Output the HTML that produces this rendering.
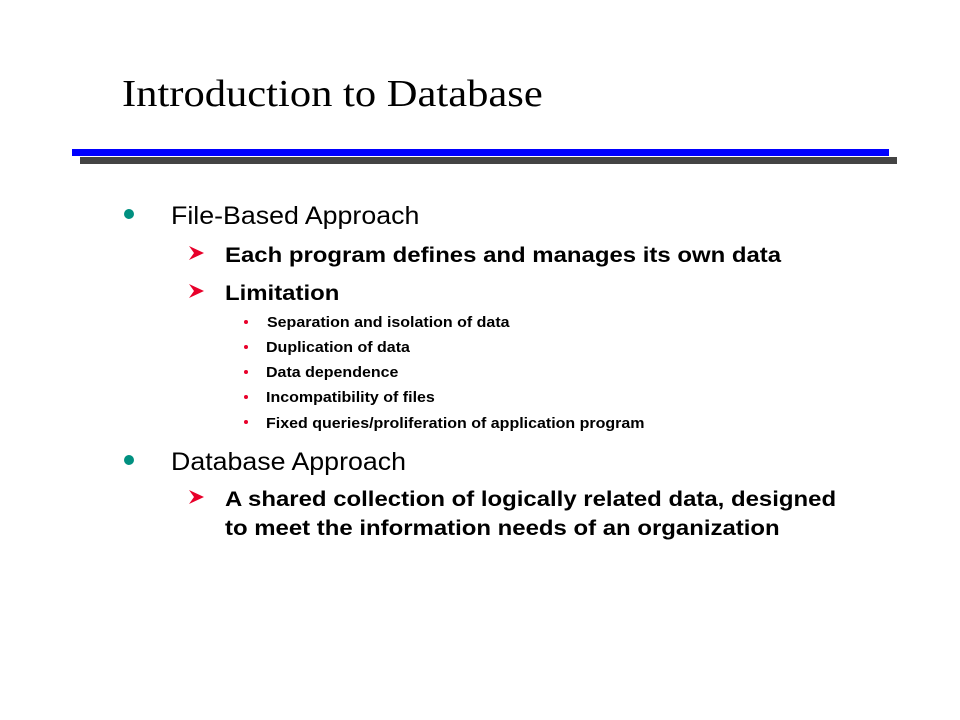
<!DOCTYPE html>
<html><head><style>
body{margin:0;width:960px;height:720px;background:#fff;position:relative;overflow:hidden;font-family:"Liberation Sans",Arial,sans-serif;color:#000}
.a{position:absolute;line-height:1;white-space:nowrap;transform-origin:0 0}
.t{font-family:"Liberation Serif",serif;font-size:38px;transform:scaleX(1.12)}
.l1{font-size:25px;transform:scaleX(1.07)}
.l2{font-size:21px;font-weight:bold;transform:scaleX(1.14)}
.l3{font-size:15px;font-weight:bold;transform:scaleX(1.066)}
.dot{position:absolute;width:10px;height:10px;border-radius:50%;background:#009080}
.rd{position:absolute;width:4px;height:4px;border-radius:50%;background:#e8002a}
svg.ar{position:absolute}
</style></head><body>
<div class="a t" style="left:122px;top:75px">Introduction to Database</div>
<div style="position:absolute;left:80px;top:157px;width:817px;height:7px;background:#444"></div>
<div style="position:absolute;left:72px;top:149px;width:817px;height:7px;background:#0000ff"></div>

<div class="dot" style="left:124px;top:209px"></div>
<div class="a l1" style="left:171px;top:204px">File-Based Approach</div>

<svg class="ar" style="left:189px;top:246px" width="16" height="14" viewBox="0 0 16 14"><path d="M0 0 L15 7 L0 14 L5 7 Z" fill="#e8002a"/></svg>
<div class="a l2" style="left:225px;top:245px">Each program defines and manages its own data</div>
<svg class="ar" style="left:189px;top:284px" width="16" height="14" viewBox="0 0 16 14"><path d="M0 0 L15 7 L0 14 L5 7 Z" fill="#e8002a"/></svg>
<div class="a l2" style="left:225px;top:283px">Limitation</div>

<div class="rd" style="left:244px;top:320px"></div><div class="a l3" style="left:267px;top:315px">Separation and isolation of data</div>
<div class="rd" style="left:244px;top:345px"></div><div class="a l3" style="left:266px;top:340px">Duplication of data</div>
<div class="rd" style="left:244px;top:370px"></div><div class="a l3" style="left:266px;top:365px">Data dependence</div>
<div class="rd" style="left:244px;top:395px"></div><div class="a l3" style="left:266px;top:390px">Incompatibility of files</div>
<div class="rd" style="left:244px;top:420px"></div><div class="a l3" style="left:266px;top:416px">Fixed queries/proliferation of application program</div>

<div class="dot" style="left:124px;top:455px"></div>
<div class="a l1" style="left:171px;top:450px">Database Approach</div>
<svg class="ar" style="left:189px;top:490px" width="16" height="14" viewBox="0 0 16 14"><path d="M0 0 L15 7 L0 14 L5 7 Z" fill="#e8002a"/></svg>
<div class="a l2" style="left:225px;top:489px">A shared collection of logically related data, designed</div>
<div class="a l2" style="left:225px;top:518px">to meet the information needs of an organization</div>
</body></html>
